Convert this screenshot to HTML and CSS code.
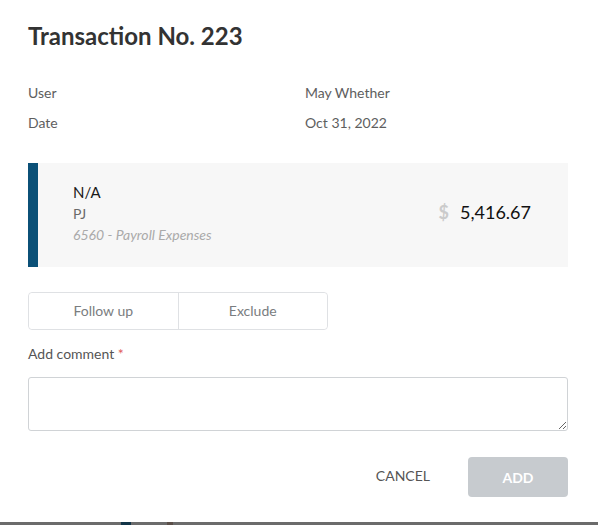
FILE: index.html
```html
<!DOCTYPE html>
<html>
<head>
<meta charset="utf-8">
<link rel="stylesheet" href="styles.css">
</head>
<body>
<div class="modal">
  <h1 class="title">Transaction No. 223</h1>
  <div class="info">
    <div class="info-row"><span class="info-label">User</span><span class="info-value">May Whether</span></div>
    <div class="info-row"><span class="info-label">Date</span><span class="info-value">Oct 31, 2022</span></div>
  </div>
  <div class="card">
    <div class="card-bar"></div>
    <div class="card-body">
      <div class="card-text">
        <div class="card-name">N/A</div>
        <div class="card-sub">PJ</div>
        <div class="card-account">6560 - Payroll Expenses</div>
      </div>
      <div class="card-amount"><span class="currency">$</span><span class="amount">5,416.67</span></div>
    </div>
  </div>
  <div class="toggle">
    <button class="toggle-btn">Follow up</button>
    <button class="toggle-btn">Exclude</button>
  </div>
  <label class="comment-label">Add comment <span class="req">*</span></label>
  <textarea class="comment"></textarea>
  <div class="actions">
    <button class="btn-cancel">CANCEL</button>
    <button class="btn-add">ADD</button>
  </div>
</div>
<div class="backdrop"><span class="backdrop-bit"></span><span class="backdrop-bit2"></span></div>
</body>
</html>
```

FILE: styles.css
```css
* { box-sizing: border-box; }
html, body { margin: 0; padding: 0; background: #fff; }
body { font-family: Lato, "Open Sans", sans-serif; width: 598px; height: 525px; overflow: hidden; }

.modal {
  height: 522px;
  background: #fff;
  padding: 22px 30px 0 28px;
  display: flex;
  flex-direction: column;
}
.title {
  margin: 0;
  font-size: 24px;
  line-height: 28.8px;
  font-weight: 700;
  color: #333;
}
.info {
  margin-top: 32.5px;
  display: flex;
  flex-direction: column;
  gap: 10px;
}
.info-row {
  display: grid;
  grid-template-columns: 277px 1fr;
  font-size: 14px;
  line-height: 20px;
  color: #5e5e5e;
}
.card {
  margin-top: 30px;
  height: 104px;
  display: flex;
  background: #f7f7f7;
}
.card-bar { width: 10px; background: #0b5077; }
.card-body {
  flex: 1;
  display: flex;
  justify-content: space-between;
  padding: 19px 37px 0 35px;
}
.card-name { font-size: 15px; line-height: 20px; color: #1a1a1a; }
.card-sub { margin-top: 2px; font-size: 14px; line-height: 20px; color: #6a6a6a; }
.card-account { margin-top: 1px; font-size: 14px; line-height: 20px; color: #aaa; font-style: italic; }
.card-amount {
  margin-top: 19px;
  display: flex;
  align-items: baseline;
  gap: 11px;
  font-size: 18px;
  line-height: 22px;
}
.currency { color: #cbcbcb; font-weight: 700; }
.amount { color: #111; }

.toggle {
  margin-top: 25px;
  display: flex;
  width: 300px;
  height: 38px;
  border: 1px solid #dfe1e4;
  border-radius: 4px;
}
.toggle-btn {
  flex: 1;
  border: 0;
  background: #fff;
  font-family: inherit;
  font-size: 14px;
  color: #7a7d80;
  border-radius: 4px;
  padding: 0 0 2px;
}
.toggle-btn + .toggle-btn { border-left: 1px solid #dfe1e4; border-radius: 0 4px 4px 0; }

.comment-label {
  margin-top: 14px;
  font-size: 14px;
  line-height: 20px;
  color: #555;
}
.req { color: #e05a5a; }
.comment {
  margin-top: 13px;
  height: 54px;
  width: 100%;
  border: 1px solid #d0d3d6;
  border-radius: 3px;
  font-family: inherit;
  resize: vertical;
}
.actions {
  margin-top: 26px;
  display: flex;
  justify-content: flex-end;
  align-items: center;
  gap: 20px;
}
.btn-cancel {
  border: 0;
  background: none;
  padding: 0 18px 4px;
  height: 40px;
  font-family: inherit;
  font-size: 14px;
  color: #555;
}
.btn-add {
  width: 100px;
  height: 40px;
  border: 0;
  border-radius: 4px;
  background: #c7cbcf;
  color: #fff;
  font-family: inherit;
  font-size: 14px;
  font-weight: 700;
}
.backdrop {
  height: 3px;
  background: #6b6b6b;
  display: flex;
}
.backdrop-bit { margin-left: 121px; width: 10px; background: #123447; }
.backdrop-bit2 { margin-left: 36px; width: 6px; background: #5a4e48; }
```
